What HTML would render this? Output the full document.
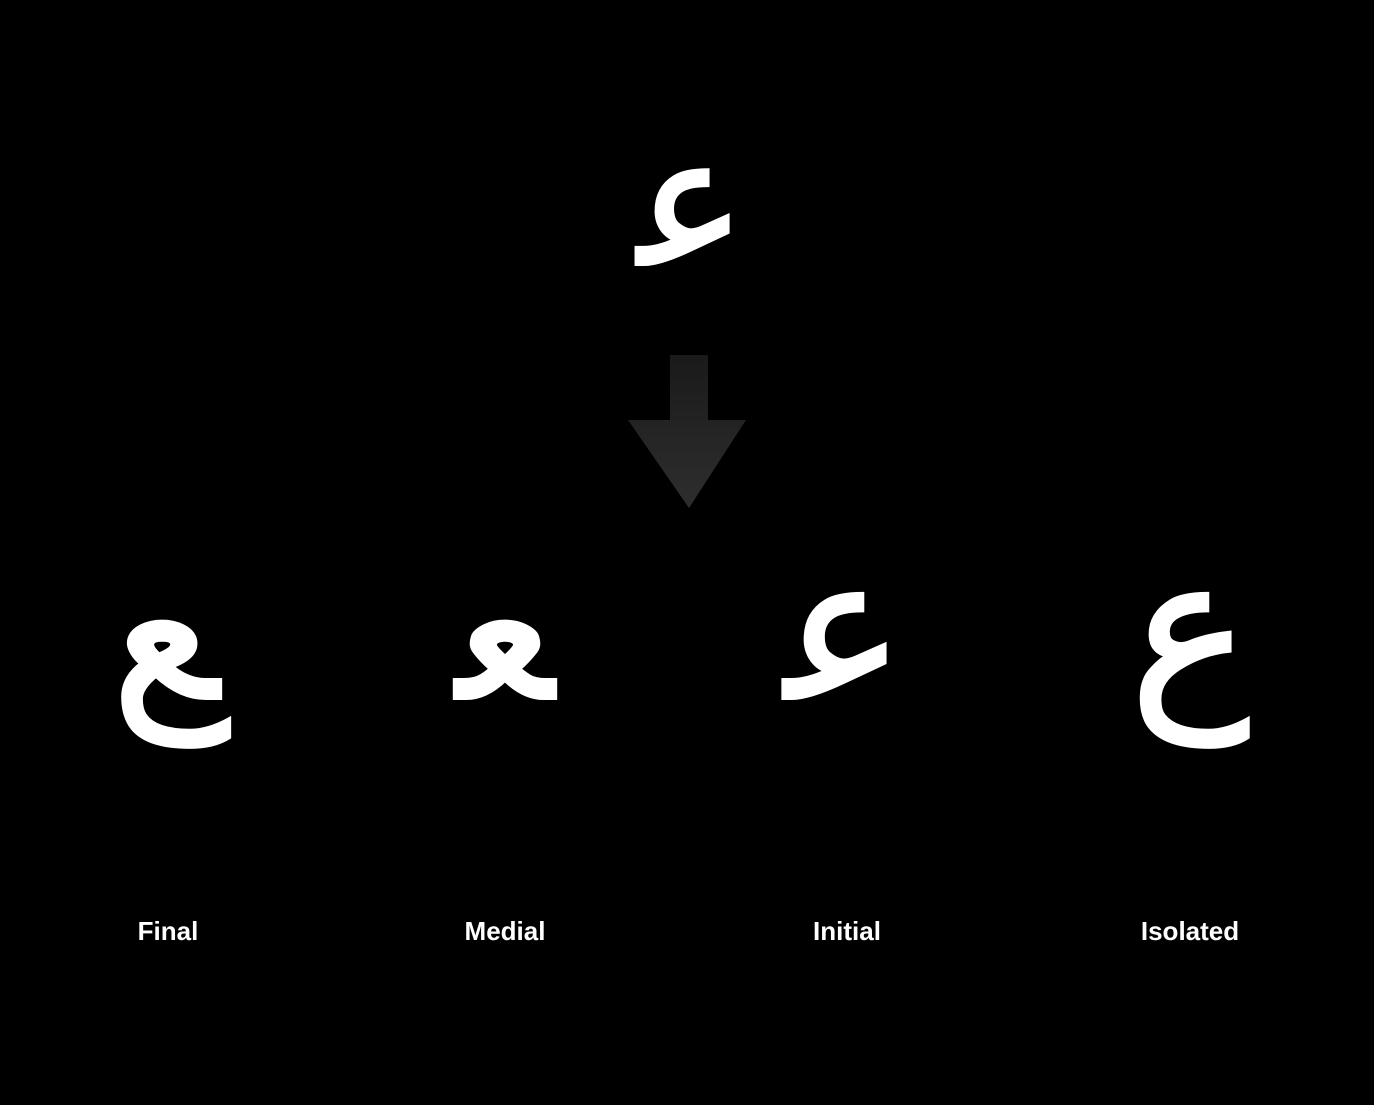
<!DOCTYPE html>
<html><head><meta charset="utf-8"><style>
html,body{margin:0;padding:0;background:#000;width:1374px;height:1105px;overflow:hidden;position:relative}
.g{position:absolute;width:300px;text-align:center;color:#fff;font-family:"DejaVu Sans",sans-serif;font-size:200px;line-height:1.164;direction:rtl;-webkit-text-stroke:4px #fff}
.l{position:absolute;width:300px;text-align:center;color:#fff;font-family:"Liberation Sans",sans-serif;font-weight:bold;font-size:26px;top:915px;line-height:32px}
</style></head><body>
<div class="g" style="left:542px;top:98px;font-size:180px">&#xFECB;</div>
<svg style="position:absolute;left:0;top:0" width="1374" height="1105">
<defs><linearGradient id="a" x1="0" y1="0" x2="0" y2="1"><stop offset="0" stop-color="#1a1a1a"/><stop offset="1" stop-color="#2e2e2e"/></linearGradient></defs>
<path d="M670 355H708V420H746L689 508L628 420H670Z" fill="url(#a)"/>
</svg>
<div class="g" style="left:15px;top:514px">&#xFECA;</div>
<div class="g" style="left:355px;top:514px">&#xFECC;</div>
<div class="g" style="left:695px;top:514px">&#xFECB;</div>
<div class="g" style="left:1040px;top:514px">&#xFEC9;</div>
<div class="l" style="left:18px">Final</div>
<div class="l" style="left:355px">Medial</div>
<div class="l" style="left:697px">Initial</div>
<div class="l" style="left:1040px">Isolated</div>
</body></html>
